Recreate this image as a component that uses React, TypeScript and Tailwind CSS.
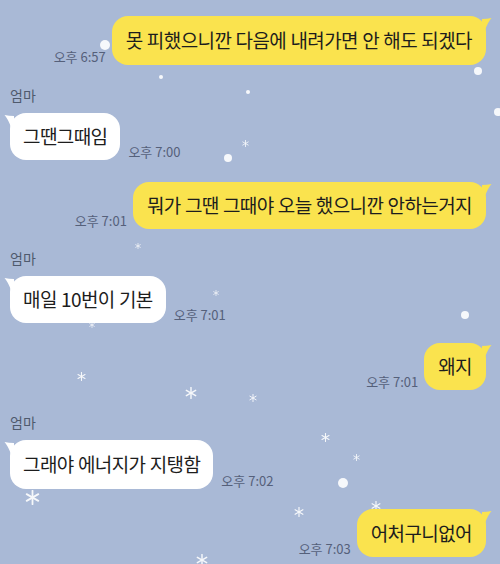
type Msg = {
  side: 'me' | 'mom';
  text: string;
  time: string;
  mt: number;
  h: number;
  label?: boolean;
};

const messages: Msg[] = [
  { side: 'me', text: '못 피했으니깐 다음에 내려가면 안 해도 되겠다', time: '오후 6:57', mt: 0, h: 49 },
  { side: 'mom', text: '그땐그때임', time: '오후 7:00', mt: 21, h: 47, label: true },
  { side: 'me', text: '뭐가 그땐 그때야 오늘 했으니깐 안하는거지', time: '오후 7:01', mt: 22, h: 47 },
  { side: 'mom', text: '매일 10번이 기본', time: '오후 7:01', mt: 20, h: 47, label: true },
  { side: 'me', text: '왜지', time: '오후 7:01', mt: 20, h: 47 },
  { side: 'mom', text: '그래야 에너지가 지탱함', time: '오후 7:02', mt: 23, h: 49, label: true },
  { side: 'me', text: '어처구니없어', time: '오후 7:03', mt: 20, h: 48 },
];

// snow decorations scattered over the wallpaper
const snow: { x: number; y: number; s: number; k: 'dot' | 'star' }[] = [
  { x: 105, y: 45, s: 10, k: 'dot' },
  { x: 161, y: 77, s: 4, k: 'dot' },
  { x: 248, y: 92, s: 4, k: 'dot' },
  { x: 478, y: 71, s: 8, k: 'dot' },
  { x: 498, y: 112, s: 8, k: 'dot' },
  { x: 245, y: 143, s: 7, k: 'star' },
  { x: 228, y: 158, s: 8, k: 'dot' },
  { x: 138, y: 246, s: 6, k: 'star' },
  { x: 216, y: 293, s: 6, k: 'star' },
  { x: 92, y: 325, s: 6, k: 'star' },
  { x: 465, y: 315, s: 8, k: 'dot' },
  { x: 81, y: 376, s: 9, k: 'star' },
  { x: 191, y: 393, s: 12, k: 'star' },
  { x: 253, y: 398, s: 8, k: 'star' },
  { x: 325, y: 437, s: 9, k: 'star' },
  { x: 356, y: 457, s: 7, k: 'star' },
  { x: 343, y: 483, s: 10, k: 'dot' },
  { x: 32, y: 497, s: 15, k: 'star' },
  { x: 299, y: 512, s: 10, k: 'star' },
  { x: 376, y: 506, s: 10, k: 'star' },
  { x: 202, y: 560, s: 12, k: 'star' },
];

function Flake({ s }: { s: number }) {
  return (
    <svg width={s} height={s} viewBox="-10 -10 20 20" stroke="white" strokeWidth="2.4" strokeLinecap="round" opacity="0.9">
      <line x1="0" y1="-9" x2="0" y2="9" />
      <line x1="-7.8" y1="-4.5" x2="7.8" y2="4.5" />
      <line x1="-7.8" y1="4.5" x2="7.8" y2="-4.5" />
    </svg>
  );
}

function Tail({ side }: { side: 'me' | 'mom' }) {
  if (side === 'me') {
    return (
      <svg className="absolute -right-[6px] top-[2px]" width="10" height="12" viewBox="0 0 10 12">
        <path d="M0 1 Q5 1 9.5 0 Q6 4 3 12 L0 12 Z" fill="#fae34e" />
      </svg>
    );
  }
  return (
    <svg className="absolute -left-[6px] top-[2px]" width="10" height="12" viewBox="0 0 10 12">
      <path d="M10 1 Q5 1 0.5 0 Q4 4 7 12 L10 12 Z" fill="#ffffff" />
    </svg>
  );
}

function Time({ t }: { t: string }) {
  return (
    <span className="text-[13px] leading-[14px] text-[#55607a] whitespace-nowrap mb-[1px]">{t}</span>
  );
}

export default function App() {
  return (
    <div className="relative w-[500px] h-[564px] overflow-hidden bg-[#a9b9d6] font-['Noto_Sans_CJK_KR',sans-serif]">
      <div className="absolute inset-0">
        {snow.map((d, i) => (
          <div
            key={i}
            className="absolute flex items-center justify-center"
            style={{ left: d.x - d.s / 2, top: d.y - d.s / 2, width: d.s, height: d.s }}
          >
            {d.k === 'dot' ? (
              <div className="w-full h-full rounded-full bg-white/90" />
            ) : (
              <Flake s={d.s} />
            )}
          </div>
        ))}
      </div>

      <div className="relative flex flex-col pt-[16px] px-[10px]">
        {messages.map((m, i) =>
          m.side === 'me' ? (
            <div
              key={i}
              className="flex justify-end items-end gap-[6px] pr-[4px]"
              style={{ marginTop: m.mt }}
            >
              <Time t={m.time} />
              <div
                className="relative flex items-center px-[14px] rounded-[16px] bg-[#fae34e] text-[19px] text-[#1d1d1d] tracking-[-0.6px] [word-spacing:0.6px] whitespace-nowrap"
                style={{ height: m.h }}
              >
                {m.text}
                <Tail side="me" />
              </div>
            </div>
          ) : (
            <div key={i} className="flex flex-col" style={{ marginTop: m.mt }}>
              {m.label && (
                <span className="text-[14px] leading-[18px] text-[#4f5a6d] mb-[9px]">엄마</span>
              )}
              <div className="flex items-end gap-[8px]">
                <div
                  className="relative flex items-center px-[13px] rounded-[16px] bg-white text-[19px] text-[#1d1d1d] tracking-[-0.6px] [word-spacing:0.6px] whitespace-nowrap"
                  style={{ height: m.h }}
                >
                  {m.text}
                  <Tail side="mom" />
                </div>
                <Time t={m.time} />
              </div>
            </div>
          ),
        )}
      </div>
    </div>
  );
}
